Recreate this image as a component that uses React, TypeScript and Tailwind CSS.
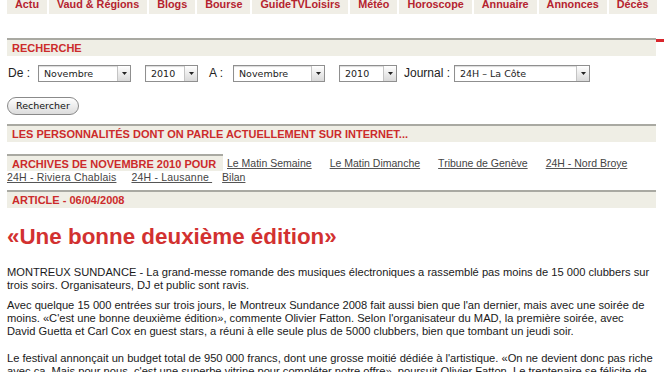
import React from 'react';

const tabs = ['Actu', 'Vaud & Régions', 'Blogs', 'Bourse', 'GuideTVLoisirs', 'Météo', 'Horoscope', 'Annuaire', 'Annonces', 'Décès'];

const FakeSelect: React.FC<{ label: string; width: string }> = ({ label, width }) => (
    <div className={`${width} h-[17px] flex items-stretch border border-[#8f8f8f] bg-white shadow-[inset_0_1px_1px_rgba(0,0,0,0.15)]`}>
        <span className="flex-1 pl-[5px] text-[9.5px] leading-[15px] text-[#222] font-['DejaVu_Sans',sans-serif] whitespace-nowrap overflow-hidden">{label}</span>
        <span className="w-[13px] flex items-center justify-center border-l border-[#c4c4c4] bg-gradient-to-b from-white to-[#d9d9d9]">
            <svg width="5" height="3" viewBox="0 0 5 3"><path d="M0 0h5L2.5 3z" fill="#222" /></svg>
        </span>
    </div>
);

const SectionHeader: React.FC<{ title: string }> = ({ title }) => (
    <div className="h-[18px] border-t-2 border-[#a9a9a2] bg-[#efeee5] pl-[5px] text-[11px] leading-[16px] font-bold text-[#cc2b2b]">
        {title}
    </div>
);

const ArchiveLink: React.FC<{ text: string; className?: string }> = ({ text, className }) => (
    <a className={`underline decoration-[#555] underline-offset-[1px] text-[#444] whitespace-nowrap ${className ?? ''}`}>{text}</a>
);

const App: React.FC = () => {
    return (
        <div className="w-[664px] h-[372px] overflow-hidden bg-white font-['Liberation_Sans',Arial,sans-serif] text-[#1a1a1a]">
            {/* top navigation, cut at the top edge */}
            <nav className="flex gap-[2px] pl-[7px] -mt-[5px]">
                {tabs.map(t => (
                    <div key={t} className="h-[19px] px-[8px] bg-[#f0eee6] text-[10.8px] leading-[19px] font-bold text-[#b5232f] whitespace-nowrap">
                        {t}
                    </div>
                ))}
            </nav>

            {/* recherche */}
            <div className="mt-[24px] flex">
                <div className="ml-[7px] w-[649px]">
                    <SectionHeader title="RECHERCHE" />
                </div>
                <div className="w-[8px] h-[3px] mt-[1px] bg-[#d9262c]" />
            </div>

            <div className="ml-[7px] w-[649px]">
                <div className="mt-[8px] flex items-center text-[12px] text-[#222]">
                    <span className="ml-[1px] w-[30px]">De :</span>
                    <FakeSelect label="Novembre" width="w-[93px]" />
                    <span className="w-[14px]" />
                    <FakeSelect label="2010" width="w-[53px]" />
                    <span className="ml-[11px] w-[24px]">A :</span>
                    <FakeSelect label="Novembre" width="w-[92px]" />
                    <span className="w-[14px]" />
                    <FakeSelect label="2010" width="w-[58px]" />
                    <span className="ml-[7px] w-[50px]">Journal :</span>
                    <FakeSelect label="24H – La Côte" width="w-[136px]" />
                </div>

                <button className="mt-[15px] h-[18px] px-[8px] rounded-full border border-[#8a8a8a] bg-gradient-to-b from-white to-[#dcdcdc] text-[9.5px] leading-[16px] text-[#111] font-['DejaVu_Sans',sans-serif]">
                    Rechercher
                </button>

                <div className="mt-[8px]">
                    <SectionHeader title="LES PERSONNALITÉS DONT ON PARLE ACTUELLEMENT SUR INTERNET..." />
                </div>

                {/* archives */}
                <div className="mt-[12px] text-[10.5px] leading-[12px]">
                    <div className="flex items-end">
                        <div className="w-[216px] h-[17px] border-t-2 border-[#a9a9a2] bg-[#efeee5] pl-[5px] text-[11px] leading-[16px] font-bold text-[#cc2b2b] whitespace-nowrap">
                            ARCHIVES DE NOVEMBRE 2010 POUR
                        </div>
                        <div className="flex mb-[2px]">
                            <ArchiveLink text="Le Matin Semaine" className="ml-[4px]" />
                            <ArchiveLink text="Le Matin Dimanche" className="ml-[18px]" />
                            <ArchiveLink text="Tribune de Genève" className="ml-[18px]" />
                            <ArchiveLink text="24H - Nord Broye" className="ml-[18px]" />
                        </div>
                    </div>
                    <div className="flex">
                        <ArchiveLink text="24H - Riviera Chablais" className="tracking-[0.2px]" />
                        <ArchiveLink text={'24H - Lausanne\u00a0'} className="ml-[15px] tracking-[0.2px]" />
                        <ArchiveLink text="Bilan" className="ml-[10px]" />
                    </div>
                </div>

                <div className="mt-[7px]">
                    <SectionHeader title="ARTICLE - 06/04/2008" />
                </div>

                <h1 className="mt-[16px] text-[22.4px] leading-[26px] font-bold text-[#d23130]">«Une bonne deuxième édition»</h1>

                <div className="mt-[16px] text-[11.15px] leading-[13px] text-[#1a1a1a] whitespace-nowrap">
                    <p>
                        MONTREUX SUNDANCE - La grand-messe romande des musiques électroniques a rassemblé pas moins de 15 000 clubbers sur<br />
                        trois soirs. Organisateurs, DJ et public sont ravis.
                    </p>
                    <p className="mt-[7px]">
                        Avec quelque 15 000 entrées sur trois jours, le Montreux Sundance 2008 fait aussi bien que l'an dernier, mais avec une soirée de<br />
                        moins. «C'est une bonne deuxième édition», commente Olivier Fatton. Selon l'organisateur du MAD, la première soirée, avec<br />
                        David Guetta et Carl Cox en guest stars, a réuni à elle seule plus de 5000 clubbers, bien que tombant un jeudi soir.
                    </p>
                    <p className="mt-[14px]">
                        Le festival annonçait un budget total de 950 000 francs, dont une grosse moitié dédiée à l'artistique. «On ne devient donc pas riche<br />
                        avec ça. Mais pour nous, c'est une superbe vitrine pour compléter notre offre», poursuit Olivier Fatton. Le trentenaire se félicite de
                    </p>
                </div>
            </div>
        </div>
    );
};

export default App;
